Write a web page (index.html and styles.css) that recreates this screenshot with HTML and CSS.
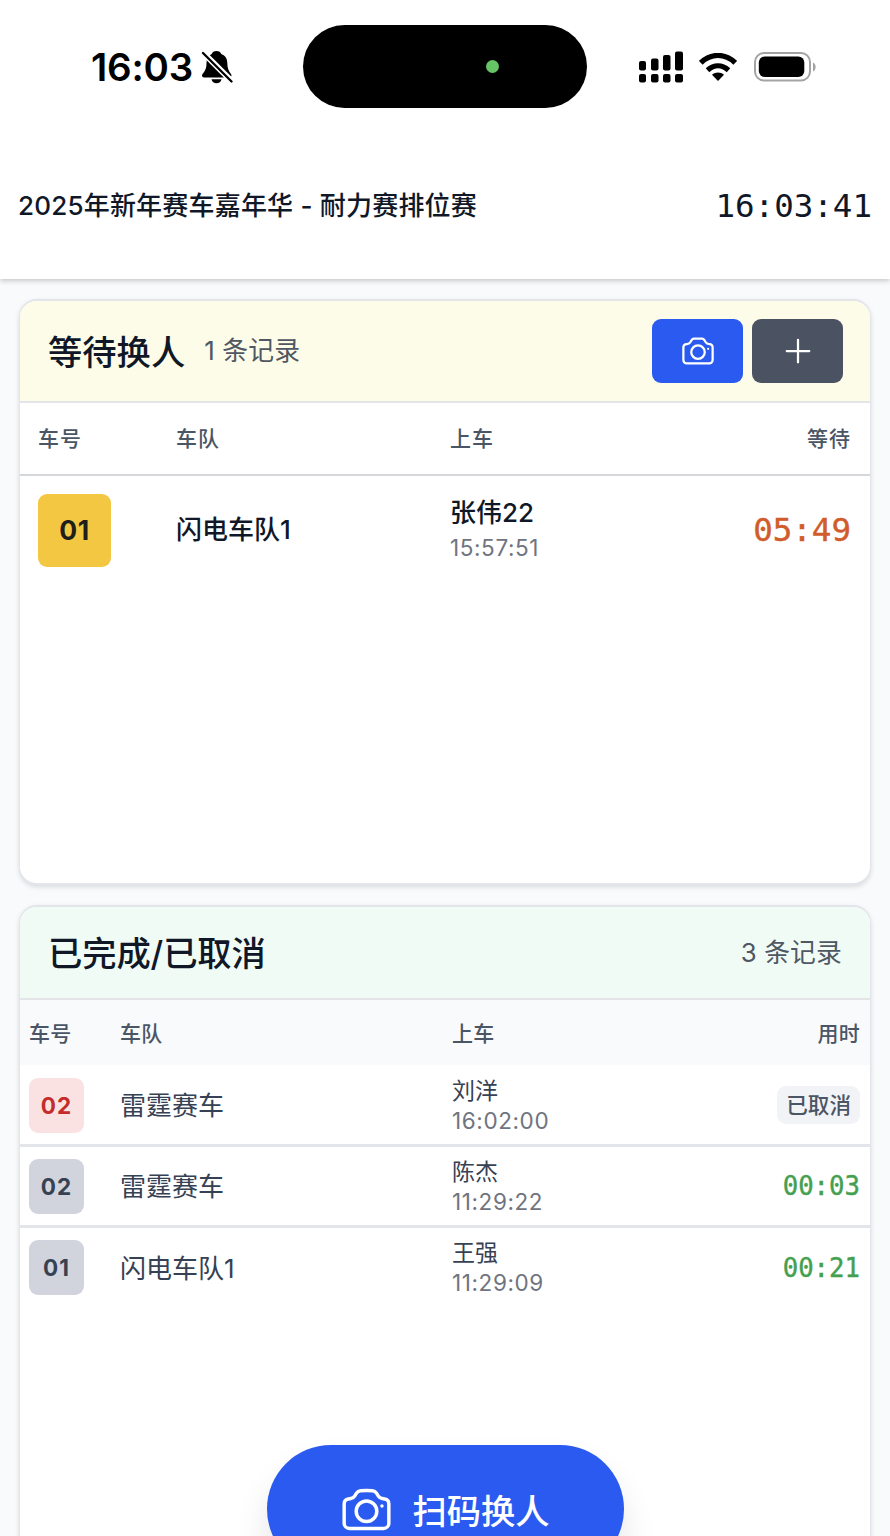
FILE: index.html
```
<!DOCTYPE html>
<html lang="zh-CN">
<head>
<meta charset="utf-8">
<title>耐力赛排位赛</title>
<link rel="stylesheet" href="styles.css">
</head>
<body>
<svg class="defs" aria-hidden="true">
  <symbol id="camera" viewBox="0 0 24 24" fill="none" stroke="currentColor" stroke-width="1.5" stroke-linecap="round" stroke-linejoin="round">
    <path d="M6.827 6.175A2.31 2.31 0 0 1 5.186 7.23c-.38.054-.757.112-1.134.175C2.999 7.58 2.25 8.507 2.25 9.574V18a2.25 2.25 0 0 0 2.25 2.25h15A2.25 2.25 0 0 0 21.75 18V9.574c0-1.067-.75-1.994-1.802-2.169a47.865 47.865 0 0 0-1.134-.175 2.31 2.31 0 0 1-1.64-1.055l-.822-1.316a2.192 2.192 0 0 0-1.736-1.039 48.774 48.774 0 0 0-5.232 0 2.192 2.192 0 0 0-1.736 1.039l-.821 1.316Z"/>
    <path d="M16.5 12.75a4.5 4.5 0 1 1-9 0 4.5 4.5 0 0 1 9 0ZM18.75 10.5h.008v.008h-.008V10.5Z"/>
  </symbol>
</svg>
<div class="screen">
  <div class="top">
    <div class="status">
      <div class="status-left">
        <span class="status-time">16:03</span>
        <svg class="bell" viewBox="0 0 32 34">
          <path d="M15.500 1C18 1 19.600 2.200 20.300 4C24.600 5.500 26.200 9 26.300 13C26.400 18 27.500 21 30 24C31 25.200 30.500 27.500 28.500 27.500H3.500C1 27.500 .3 25.500 1.500 24C4.500 20.500 5.500 18 5.500 13C5.600 9 7.200 5.500 10.700 4C11.400 2.200 13 1 15.500 1Z"/>
          <path d="M10.500 29.300H20.500C20 32 18 33.300 15.500 33.300S11 32 10.500 29.300Z"/>
          <path d="M2.500 3L31.500 32" stroke="#fff" stroke-width="6"/>
          <path d="M2 3L30.500 31.500" stroke="#000" stroke-width="2.300" stroke-linecap="round"/>
        </svg>
      </div>
      <div class="island"><span class="island-dot"></span></div>
      <div class="status-right">
        <svg class="signal" viewBox="0 0 44 32">
          <rect x="0" y="10" width="7" height="9.500" rx="2"/>
          <rect x="12" y="7.500" width="7.500" height="12" rx="2"/>
          <rect x="24" y="4" width="7.500" height="15.500" rx="2"/>
          <rect x="36" y="0.500" width="8" height="19" rx="2"/>
          <rect x="0" y="23" width="7" height="8.500" rx="2"/>
          <rect x="12" y="23" width="7.500" height="8.500" rx="2"/>
          <rect x="24" y="23" width="7.500" height="8.500" rx="2"/>
          <rect x="36" y="23" width="8" height="8.500" rx="2"/>
        </svg>
        <svg class="wifi" viewBox="0 0 38 28">
          <path d="M1.800 9.800C12 0 26 0 36.200 9.800M8.500 17.200C15 11.400 23 11.400 29.500 17.200" fill="none" stroke="#000" stroke-width="5.300"/>
          <path d="M13 21.800C16.500 18.800 21.500 18.800 25 21.800L19 28Z"/>
        </svg>
        <svg class="battery" viewBox="0 0 62 30">
          <rect x="1" y="1" width="55" height="27.500" rx="9" fill="none" stroke="#a3a3a3" stroke-width="2"/>
          <rect x="4.800" y="4.500" width="45.500" height="20.500" rx="6"/>
          <path d="M59 10.500C62.500 12 62.500 18 59 19.500Z" fill="#a3a3a3"/>
        </svg>
      </div>
    </div>
    <header class="event">
      <h1 class="event-name">2025年新年赛车嘉年华 - 耐力赛排位赛</h1>
      <time class="clock mono">16:03:41</time>
    </header>
  </div>

  <main class="content">
    <section class="card waiting">
      <div class="card-head">
        <div class="heading">
          <h2>等待换人</h2>
          <span class="count">1 条记录</span>
        </div>
        <div class="actions">
          <button class="btn btn-blue" aria-label="扫码"><svg class="icon"><use href="#camera"/></svg></button>
          <button class="btn btn-gray" aria-label="添加"><svg class="icon" viewBox="0 0 24 24"><path d="M12 4.500v15m7.500-7.500h-15" fill="none" stroke="currentColor" stroke-width="1.500" stroke-linecap="round"/></svg></button>
        </div>
      </div>
      <div class="row labels"><span>车号</span><span>车队</span><span>上车</span><span class="end">等待</span></div>
      <div class="row entry">
        <span class="number">01</span>
        <span class="team">闪电车队1</span>
        <span class="driver"><b>张伟22</b><small>15:57:51</small></span>
        <span class="end elapsed mono">05:49</span>
      </div>
    </section>

    <section class="card finished">
      <div class="card-head">
        <h2>已完成/已取消</h2>
        <span class="count">3 条记录</span>
      </div>
      <div class="row labels"><span>车号</span><span>车队</span><span>上车</span><span class="end">用时</span></div>
      <div class="row entry">
        <span class="number cancelled">02</span>
        <span class="team">雷霆赛车</span>
        <span class="driver"><b>刘洋</b><small>16:02:00</small></span>
        <span class="end tag">已取消</span>
      </div>
      <div class="row entry">
        <span class="number">02</span>
        <span class="team">雷霆赛车</span>
        <span class="driver"><b>陈杰</b><small>11:29:22</small></span>
        <span class="end elapsed mono">00:03</span>
      </div>
      <div class="row entry">
        <span class="number">01</span>
        <span class="team">闪电车队1</span>
        <span class="driver"><b>王强</b><small>11:29:09</small></span>
        <span class="end elapsed mono">00:21</span>
      </div>
    </section>
  </main>
  <button class="scan"><svg class="icon"><use href="#camera"/></svg><span>扫码换人</span></button>
</div>
</body>
</html>
```
FILE: styles.css
```
* { box-sizing: border-box; }
body {
  margin: 0;
  background: #f9fafc;
  color: #101828;
  font-family: Inter, "Noto Sans CJK SC", sans-serif;
}
h1, h2 { margin: 0; }
button { border: 0; padding: 0; color: #fff; font-family: inherit; }
.defs { position: absolute; width: 0; height: 0; }
.mono { font-family: "DejaVu Sans Mono", monospace; }
.screen { position: relative; height: 1536px; overflow: hidden; display: flex; flex-direction: column; }

.top { height: 279px; flex: none; background: #fff; box-shadow: 0 2px 5px rgba(0, 0, 0, .2); }
.status {
  height: 133px;
  display: grid;
  grid-template-columns: 303px 284px 1fr;
  align-items: center;
}
.status-left { display: flex; align-items: center; gap: 9px; padding-left: 91px; }
.status-time { width: 101px; font-size: 38.500px; line-height: 46px; font-weight: 600; letter-spacing: -.2px; color: #000; }
.bell { width: 32px; height: 34px; }
.island { height: 83px; border-radius: 42px; background: #000; display: flex; align-items: center; padding-left: 183px; }
.island-dot { width: 13px; height: 13px; border-radius: 50%; background: #64c466; }
.status-right { display: flex; align-items: center; padding-left: 52px; }
.signal { width: 44px; height: 32px; }
.wifi { width: 38px; height: 28px; margin-left: 16px; }
.battery { width: 62px; height: 30px; margin-left: 17px; }
.event { height: 146px; display: flex; justify-content: space-between; align-items: center; padding: 0 18px; }
.event-name { font-size: 26px; line-height: 36px; font-weight: 500; letter-spacing: .2px; }
.clock { font-size: 32.500px; line-height: 38px; }

.content { flex: 1; padding: 20px 19px 0; display: flex; flex-direction: column; gap: 20px; }
.card {
  border: 2px solid #e4e5eb;
  border-width: 2px 1px;
  border-radius: 18px;
  background: #fff;
  overflow: hidden;
  box-shadow: 0 2px 5px rgba(0, 0, 0, .13);
}
.waiting { height: 586px; flex: none; }
.finished { height: 700px; flex: none; }
.card-head {
  display: flex;
  align-items: center;
  justify-content: space-between;
  border-bottom: 2px solid #e4e5e9;
}
.waiting .card-head { height: 102px; padding: 0 27px 0 28px; background: #fdfce8; }
.finished .card-head { height: 93px; padding: 0 28px; background: #f1fbf5; }
.heading { display: flex; align-items: center; gap: 19px; }
h2 { font-size: 34.300px; line-height: 44px; font-weight: 500; padding-top: 3px; }
.finished h2 { letter-spacing: -.1px; }
.count { font-size: 25.800px; line-height: 34px; color: #4f5763; letter-spacing: .15px; }
.actions { display: flex; gap: 9px; }
.btn { width: 91px; height: 64px; border-radius: 9px; display: grid; place-items: center; }
.btn .icon { width: 36px; height: 36px; }
.btn-blue { background: #2b5af0; }
.btn-gray { background: #4b5262; }

.row { display: grid; align-items: center; }
.end { justify-self: end; }
.labels { color: #4a5565; font-size: 21px; line-height: 28px; font-weight: 500; }
.waiting .row { grid-template-columns: 138px 274px 1fr auto; padding: 0 19px 0 18px; }
.waiting .labels { height: 73px; border-bottom: 2px solid #d5d7db; letter-spacing: 1px; }
.waiting .entry { height: 108px; }
.finished .row { grid-template-columns: 91px 332px 1fr auto; padding: 0 10px 0 9px; }
.finished .labels { height: 65px; background: #f9fafc; letter-spacing: .2px; }
.finished .labels > span { padding-top: 2px; }
.finished .entry { height: 81px; border-bottom: 3px solid #e4e5eb; }
.finished .labels + .entry { height: 82px; padding-top: 1px; }
.finished .entry:last-child { height: 79px; border-bottom: 0; }

.number { display: grid; place-items: center; font-weight: 700; border-radius: 9px; }
.waiting .number { width: 73px; height: 73px; background: #f4c743; color: #1e1f19; font-size: 26.500px; letter-spacing: .5px; }
.finished .number { width: 55px; height: 55px; background: #d1d4dc; color: #364153; font-size: 22.500px; letter-spacing: 1px; }
.finished .number.cancelled { background: #fbe2e2; color: #c42c2b; }
.team { font-size: 26px; line-height: 36px; }
.waiting .team { font-weight: 500; }
.finished .team { padding-top: 2px; }
.finished .team, .finished b { color: #364153; }
.driver { display: flex; flex-direction: column; }
.driver b { font-weight: 400; }
.driver small { color: #6f7480; font-size: 22.500px; letter-spacing: .6px; }
.waiting b { font-size: 26px; line-height: 36px; font-weight: 500; }
.waiting small { line-height: 34px; }
.finished b { font-size: 23px; line-height: 31px; }
.finished small { line-height: 28px; }
.elapsed { -webkit-text-stroke: .4px; }
.waiting .elapsed { color: #d25b2b; font-size: 32.500px; }
.finished .elapsed { color: #459f50; font-size: 25.700px; }
.tag { padding: 0 9px; height: 38px; border-radius: 9px; background: #f2f3f6; color: #4a5565; font-size: 21.600px; line-height: 38px; font-weight: 500; }

.scan {
  position: absolute;
  left: 267px;
  top: 1445px;
  width: 357px;
  height: 128px;
  border-radius: 64px;
  background: #2b5af0;
  display: flex;
  align-items: center;
  justify-content: center;
  gap: 18px;
  padding-right: 2px;
  font-size: 34.300px;
  font-weight: 500;
  box-shadow: 0 22px 34px rgba(0, 0, 0, .1);
}
.scan .icon { width: 55px; height: 55px; }
```
